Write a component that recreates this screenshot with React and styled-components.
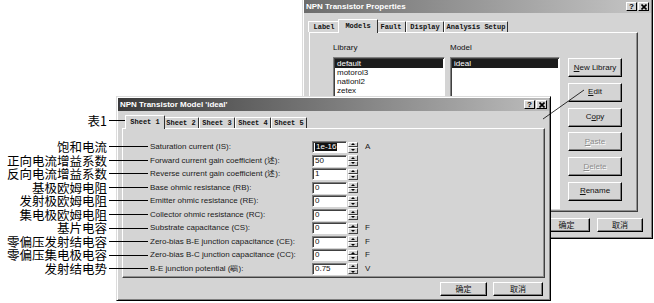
import React from 'react';
import styled, { createGlobalStyle } from 'styled-components';

const FACE = '#d4d4d4';
const SANS = '"Liberation Sans", Arial, sans-serif';
const CJK = '"Noto Sans CJK SC", "Noto Sans CJK TC", sans-serif';
const MONO = '"Liberation Mono", "Courier New", monospace';

const GlobalStyle = createGlobalStyle`
  html, body { margin: 0; padding: 0; background: #fff; }
  body { font-family: ${SANS}; }
  * { box-sizing: border-box; }
`;

const Canvas = styled.div`
  position: relative;
  width: 654px;
  height: 303px;
  overflow: hidden;
  background: #fff;
`;

const Window = styled.div`
  position: absolute;
  left: ${p => p.$x}px;
  top: ${p => p.$y}px;
  width: ${p => p.$w}px;
  height: ${p => p.$h}px;
  z-index: ${p => p.$z};
  display: flex;
  flex-direction: column;
  padding: 1px;
  background: ${FACE};
  border: 1px solid;
  border-color: #dcdcdc #000 #000 #dcdcdc;
  box-shadow: inset 1px 1px #fff, inset -1px -1px #808080;
`;

const TitleBar = styled.div`
  flex: none;
  height: 13px;
  display: flex;
  align-items: center;
  justify-content: space-between;
  padding: 0 2px;
  background: linear-gradient(90deg, ${p => p.$from}, ${p => p.$to});
  color: #fff;
  font: bold 8px/1 ${SANS};
  white-space: nowrap;
`;

const TitleButtons = styled.div`
  display: flex;
  gap: 1px;
`;

const TitleButton = styled.span`
  width: 11px;
  height: 9px;
  display: flex;
  align-items: center;
  justify-content: center;
  background: ${FACE};
  border: 1px solid;
  border-color: #fff #000 #000 #fff;
  color: #000;
  font: bold 8px/1 ${SANS};
`;

const TabStrip = styled.div`
  flex: none;
  display: flex;
  align-items: flex-end;
  height: 13px;
  margin-top: ${p => p.$mt}px;
  padding-left: ${p => p.$pl}px;
  position: relative;
  z-index: 1;
`;

const Tab = styled.div`
  position: relative;
  z-index: ${p => (p.$active ? 2 : 1)};
  width: ${p => p.$w + (p.$active ? 4 : 0)}px;
  height: ${p => (p.$active ? 14 : 11)}px;
  margin: 0 ${p => (p.$active ? -2 : 0)}px ${p => (p.$active ? -1 : 0)}px;
  display: flex;
  align-items: center;
  justify-content: center;
  background: ${FACE};
  border: 1px solid;
  border-bottom: none;
  border-color: #fff #303030 #303030 #fff;
  border-radius: 1px 1px 0 0;
  font: bold 7px/1 ${MONO};
  color: #111;
  white-space: nowrap;
`;

const TabPanel = styled.div`
  flex: none;
  height: ${p => p.$h}px;
  margin: 0 ${p => p.$mr}px 0 ${p => p.$ml}px;
  border: 1px solid;
  border-color: #fff #404040 #404040 #fff;
  box-shadow: inset -1px -1px #909090;
`;

/* ---------- back dialog: models ---------- */

const ModelsLayout = styled.div`
  display: flex;
  padding: 10px 0 0 23px;
`;

const ListColumn = styled.div`
  width: ${p => p.$w}px;
  margin-right: ${p => p.$gap}px;
  display: flex;
  flex-direction: column;
`;

const FieldCaption = styled.div`
  height: 9px;
  margin-bottom: 5px;
  font: 8px/9px ${SANS};
  color: #111;
`;

const ListBox = styled.div`
  height: 152px;
  background: #fff;
  border: 1px solid;
  border-color: #808080 #fff #fff #808080;
  box-shadow: inset 1px 1px #404040;
  padding: 1px;
  font: 8px/9px ${SANS};
  color: #111;
`;

const ListItem = styled.div`
  height: 9px;
  padding-left: 2px;
  background: ${p => (p.$selected ? '#1c1c1c' : 'transparent')};
  color: ${p => (p.$selected ? '#fff' : '#111')};
  white-space: nowrap;
`;

const ButtonColumn = styled.div`
  width: 54px;
  padding-top: 15px;
  display: flex;
  flex-direction: column;
  gap: 5.8px;
`;

const Button = styled.div`
  flex: none;
  width: ${p => p.$w}px;
  height: ${p => p.$h}px;
  display: flex;
  align-items: center;
  justify-content: center;
  background: ${FACE};
  border: 1px solid;
  border-color: #fff #000 #000 #fff;
  box-shadow: inset -1px -1px #808080;
  font: 8px/1 ${p => (p.$cjk ? CJK : SANS)};
  color: ${p => (p.$disabled ? '#8c8c8c' : '#111')};
  text-shadow: ${p => (p.$disabled ? '1px 1px #fff' : 'none')};
  white-space: nowrap;
`;

const ButtonBar = styled.div`
  flex: none;
  display: flex;
  justify-content: flex-end;
  gap: ${p => p.$gap}px;
  margin-top: ${p => p.$mt}px;
  padding-right: ${p => p.$pr}px;
`;

/* ---------- front dialog: parameters ---------- */

const ParamList = styled.div`
  display: flex;
  flex-direction: column;
  gap: 1.56px;
  padding: 12px 0 0 27px;
`;

const ParamRow = styled.div`
  display: flex;
  align-items: center;
  height: 12px;
`;

const ParamLabel = styled.span`
  width: 162px;
  font: 8px/1 ${SANS};
  color: #1a1a1a;
  white-space: nowrap;
`;

const Field = styled.div`
  width: 35px;
  height: 12px;
  display: flex;
  align-items: center;
  padding-left: 2px;
  background: #fff;
  border: 1px solid;
  border-color: #808080 #fff #fff #808080;
  box-shadow: inset 1px 1px #404040;
  font: 8px/1 ${SANS};
  color: #111;
`;

const Selected = styled.span`
  background: #111;
  color: #fff;
  padding: 0 1px;
`;

const Spinner = styled.div`
  width: 10px;
  height: 11px;
  margin-left: 1px;
  display: flex;
  flex-direction: column;
`;

const SpinHalf = styled.div`
  flex: 1;
  position: relative;
  background: ${FACE};
  border: 1px solid;
  border-color: #fff #404040 #404040 #fff;
  &::after {
    content: '';
    position: absolute;
    left: 50%;
    top: 50%;
    transform: translate(-50%, -50%);
    border-left: 2px solid transparent;
    border-right: 2px solid transparent;
    ${p => (p.$up ? 'border-bottom: 2px solid #000;' : 'border-top: 2px solid #000;')}
  }
`;

const Unit = styled.span`
  margin-left: 7px;
  font: 8px/1 ${SANS};
  color: #1a1a1a;
`;

/* ---------- annotations ---------- */

const Callouts = styled.div`
  position: absolute;
  left: 0;
  top: 114px;
  width: 148px;
  z-index: 10;
  display: flex;
  flex-direction: column;
`;

const Callout = styled.div`
  display: flex;
  align-items: center;
  justify-content: flex-end;
  height: 13.56px;
  margin-bottom: ${p => p.$mb || 0}px;
  padding-right: ${p => p.$pr || 0}px;
  font: 12.5px/13.56px ${CJK};
  color: #000;
  white-space: nowrap;
`;

const Leader = styled.span`
  flex: none;
  width: ${p => p.$len}px;
  height: 1px;
  margin-left: 2px;
  background: #000;
`;

const Pointer = styled.svg`
  position: absolute;
  left: 0;
  top: 0;
  z-index: 10;
  pointer-events: none;
`;

const CloseGlyph = () => (
  <svg width="6" height="6" viewBox="0 0 6 6">
    <path d="M0.5 0.5L5.5 5.5M5.5 0.5L0.5 5.5" stroke="#000" strokeWidth="1.6" />
  </svg>
);

const params = [
  { label: 'Saturation current (IS):', value: '1e-16', unit: 'A', selected: true },
  { label: 'Forward current gain coefficient (述):', value: '50' },
  { label: 'Reverse current gain coefficient (述):', value: '1' },
  { label: 'Base ohmic resistance (RB):', value: '0' },
  { label: 'Emitter ohmic resistance (RE):', value: '0' },
  { label: 'Collector ohmic resistance (RC):', value: '0' },
  { label: 'Substrate capacitance (CS):', value: '0', unit: 'F' },
  { label: 'Zero-bias B-E junction capacitance (CE):', value: '0', unit: 'F' },
  { label: 'Zero-bias B-C junction capacitance (CC):', value: '0', unit: 'F' },
  { label: 'B-E junction potential (鶡):', value: '0.75', unit: 'V' },
];

const notes = [
  '饱和电流', '正向电流增益系数', '反向电流增益系数', '基极欧姆电阻', '发射极欧姆电阻',
  '集电极欧姆电阻', '基片电容', '零偏压发射结电容', '零偏压集电极电容', '发射结电势',
];

const backTabs = [
  { t: 'Label', w: 32 },
  { t: 'Models', w: 36, active: true },
  { t: 'Fault', w: 30 },
  { t: 'Display', w: 38 },
  { t: 'Analysis Setup', w: 64 },
];

export default function App() {
  return (
    <>
      <GlobalStyle />
      <Canvas>
        <Window $x={302} $y={-2} $w={351} $h={241} $z={1}>
          <TitleBar $from="#6c6c6c" $to="#c6c6c6">
            <span>NPN Transistor Properties</span>
            <TitleButtons>
              <TitleButton>?</TitleButton>
              <TitleButton><CloseGlyph /></TitleButton>
            </TitleButtons>
          </TitleBar>
          <TabStrip $mt={6} $pl={4}>
            {backTabs.map(tab => (
              <Tab key={tab.t} $w={tab.w} $active={tab.active}>{tab.t}</Tab>
            ))}
          </TabStrip>
          <TabPanel $h={180} $ml={5} $mr={13}>
            <ModelsLayout>
              <ListColumn $w={112} $gap={5}>
                <FieldCaption>Library</FieldCaption>
                <ListBox>
                  <ListItem $selected>default</ListItem>
                  <ListItem>motorol3</ListItem>
                  <ListItem>nationl2</ListItem>
                  <ListItem>zetex</ListItem>
                </ListBox>
              </ListColumn>
              <ListColumn $w={110} $gap={8}>
                <FieldCaption>Model</FieldCaption>
                <ListBox>
                  <ListItem $selected>ideal</ListItem>
                </ListBox>
              </ListColumn>
              <ButtonColumn>
                <Button $w={54} $h={19}><u>N</u>ew Library</Button>
                <Button $w={54} $h={19}><u>E</u>dit</Button>
                <Button $w={54} $h={19}>C<u>o</u>py</Button>
                <Button $w={54} $h={19} $disabled><u>P</u>aste</Button>
                <Button $w={54} $h={19} $disabled><u>D</u>elete</Button>
                <Button $w={54} $h={19}><u>R</u>ename</Button>
              </ButtonColumn>
            </ModelsLayout>
          </TabPanel>
          <ButtonBar $mt={6} $pr={8} $gap={7}>
            <Button $w={47} $h={14} $cjk>确定</Button>
            <Button $w={46} $h={14} $cjk>取消</Button>
          </ButtonBar>
        </Window>

        <Window $x={116} $y={96} $w={435} $h={205} $z={2}>
          <TitleBar $from="#3a3a3a" $to="#bdbdbd">
            <span>NPN Transistor Model 'ideal'</span>
            <TitleButtons>
              <TitleButton>?</TitleButton>
              <TitleButton><CloseGlyph /></TitleButton>
            </TitleButtons>
          </TitleBar>
          <TabStrip $mt={4} $pl={9}>
            {[1, 2, 3, 4, 5].map(n => (
              <Tab key={n} $w={36} $active={n === 1}>Sheet {n}</Tab>
            ))}
          </TabStrip>
          <TabPanel $h={150} $ml={4} $mr={4}>
            <ParamList>
              {params.map(p => (
                <ParamRow key={p.label}>
                  <ParamLabel>{p.label}</ParamLabel>
                  <Field>{p.selected ? <Selected>{p.value}</Selected> : p.value}</Field>
                  <Spinner>
                    <SpinHalf $up />
                    <SpinHalf />
                  </Spinner>
                  {p.unit && <Unit>{p.unit}</Unit>}
                </ParamRow>
              ))}
            </ParamList>
          </TabPanel>
          <ButtonBar $mt={4} $pr={6} $gap={6}>
            <Button $w={47} $h={14} $cjk>确定</Button>
            <Button $w={50} $h={14} $cjk>取消</Button>
          </ButtonBar>
        </Window>

        <Callouts>
          <Callout $mb={12.44} $pr={23}>表1<Leader $len={16} /></Callout>
          {notes.map(n => (
            <Callout key={n}>{n}<Leader $len={39} /></Callout>
          ))}
        </Callouts>

        <Pointer width="654" height="303" viewBox="0 0 654 303">
          <line x1="584" y1="90" x2="543" y2="119" stroke="#000" strokeWidth="0.8" />
        </Pointer>
      </Canvas>
    </>
  );
}
